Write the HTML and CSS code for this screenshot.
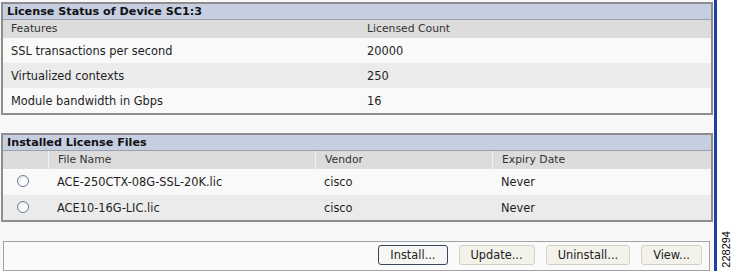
FILE: index.html
```html
<!DOCTYPE html>
<html>
<head>
    <meta name="viewport" content="width=device-width, initial-scale=1.0">
    <title>License Management</title>
    <link rel="stylesheet" href="styles.css">
</head>
<body>
    <div class="page">
        <div class="content">
            <div class="panel">
                <div class="panel-title">License Status of Device SC1:3</div>
                <div class="grid status-grid head">
                    <div class="cell">Features</div>
                    <div class="cell">Licensed Count</div>
                </div>
                <div class="grid status-grid row">
                    <div class="cell">SSL transactions per second</div>
                    <div class="cell">20000</div>
                </div>
                <div class="grid status-grid row alt">
                    <div class="cell">Virtualized contexts</div>
                    <div class="cell">250</div>
                </div>
                <div class="grid status-grid row">
                    <div class="cell">Module bandwidth in Gbps</div>
                    <div class="cell">16</div>
                </div>
            </div>

            <div class="panel files">
                <div class="panel-title">Installed License Files</div>
                <div class="grid files-grid head">
                    <div class="cell"></div>
                    <div class="cell sep">File Name</div>
                    <div class="cell sep">Vendor</div>
                    <div class="cell sep">Expiry Date</div>
                </div>
                <div class="grid files-grid row tall">
                    <div class="cell pick"><input type="radio" name="lic"></div>
                    <div class="cell">ACE-250CTX-08G-SSL-20K.lic</div>
                    <div class="cell">cisco</div>
                    <div class="cell">Never</div>
                </div>
                <div class="grid files-grid row alt">
                    <div class="cell pick"><input type="radio" name="lic"></div>
                    <div class="cell">ACE10-16G-LIC.lic</div>
                    <div class="cell">cisco</div>
                    <div class="cell">Never</div>
                </div>
            </div>

            <div class="actions">
                <button class="btn default">Install...</button>
                <button class="btn">Update...</button>
                <button class="btn">Uninstall...</button>
                <button class="btn">View...</button>
            </div>
        </div>
        <div class="edge">
            <span class="fig-id">228294</span>
        </div>
    </div>
</body>
</html>
```

FILE: styles.css
```css
html, body {
    margin: 0;
    padding: 0;
    background-color: #ffffff;
}
body {
    font-family: "DejaVu Sans", Verdana, sans-serif;
    font-size: 11.4px;
    color: #1e1e1e;
}
.page {
    display: flex;
    height: 271px;
}
.content {
    width: 717px;
    box-sizing: border-box;
    padding: 2px 1px 0 1px;
    background-color: #f8f8f8;
    border-right: 3px solid #1c3fa8;
    display: flex;
    flex-direction: column;
}
.panel {
    border: 2px solid #8d8d8d;
    background-color: #f9f9f9;
}
.panel.files {
    margin-top: 18px;
}
.panel-title {
    height: 15px;
    line-height: 15px;
    padding-left: 4px;
    background-color: #c6cee2;
    border-bottom: 1px solid #9a9fab;
    font-weight: bold;
    font-size: 11.2px;
    color: #111;
}
.grid {
    display: grid;
    align-items: center;
}
.status-grid {
    grid-template-columns: 356px 1fr;
}
.files-grid {
    grid-template-columns: 45px 267px 177px 1fr;
}
.head {
    height: 18px;
    background-color: #dcdcdc;
    font-size: 10.8px;
    color: #333;
}
.head .cell {
    height: 18px;
    line-height: 18px;
}
.head .sep {
    border-left: 1px solid #f2f2f2;
}
.row {
    height: 25px;
    background-color: #f9f9f9;
}
.row.tall {
    height: 26px;
}
.row.alt {
    background-color: #ebebeb;
}
.cell {
    padding-left: 8px;
    white-space: nowrap;
}
.files-grid .cell:nth-child(n+2) {
    padding-left: 9px;
}
.files-grid .head .cell:nth-child(n+2) {
    padding-left: 8px;
}
.cell.pick {
    padding-left: 14px;
    display: flex;
    align-items: center;
}
input[type="radio"] {
    appearance: none;
    -webkit-appearance: none;
    margin: 0 0 2px 0;
    width: 12px;
    height: 12px;
    border: 1px solid #6d7d96;
    border-radius: 50%;
    background: radial-gradient(circle at 60% 65%, #ffffff 30%, #dde1e8 100%);
}
.actions {
    margin: 19px 3px 0 2px;
    height: 25px;
    border: 1px solid #a3a3a3;
    background-color: #fafafa;
    display: flex;
    justify-content: flex-end;
    align-items: flex-start;
    padding: 3px 7px 0 0;
    gap: 11px;
}
.btn {
    height: 20px;
    padding: 0 11px;
    font-family: "DejaVu Sans", Verdana, sans-serif;
    font-size: 11.4px;
    color: #222;
    background-color: #f3f2ea;
    border: 1px solid #d3d1c4;
    border-radius: 3px;
}
.btn.default {
    background-color: #f6f6f4;
    border-color: #37465a;
}
.edge {
    flex: 1;
    display: flex;
    align-items: flex-end;
    justify-content: center;
    padding-bottom: 3px;
}
.fig-id {
    writing-mode: vertical-rl;
    transform: rotate(180deg);
    font-family: "Liberation Sans", Arial, sans-serif;
    font-size: 11px;
    color: #000;
}
```
